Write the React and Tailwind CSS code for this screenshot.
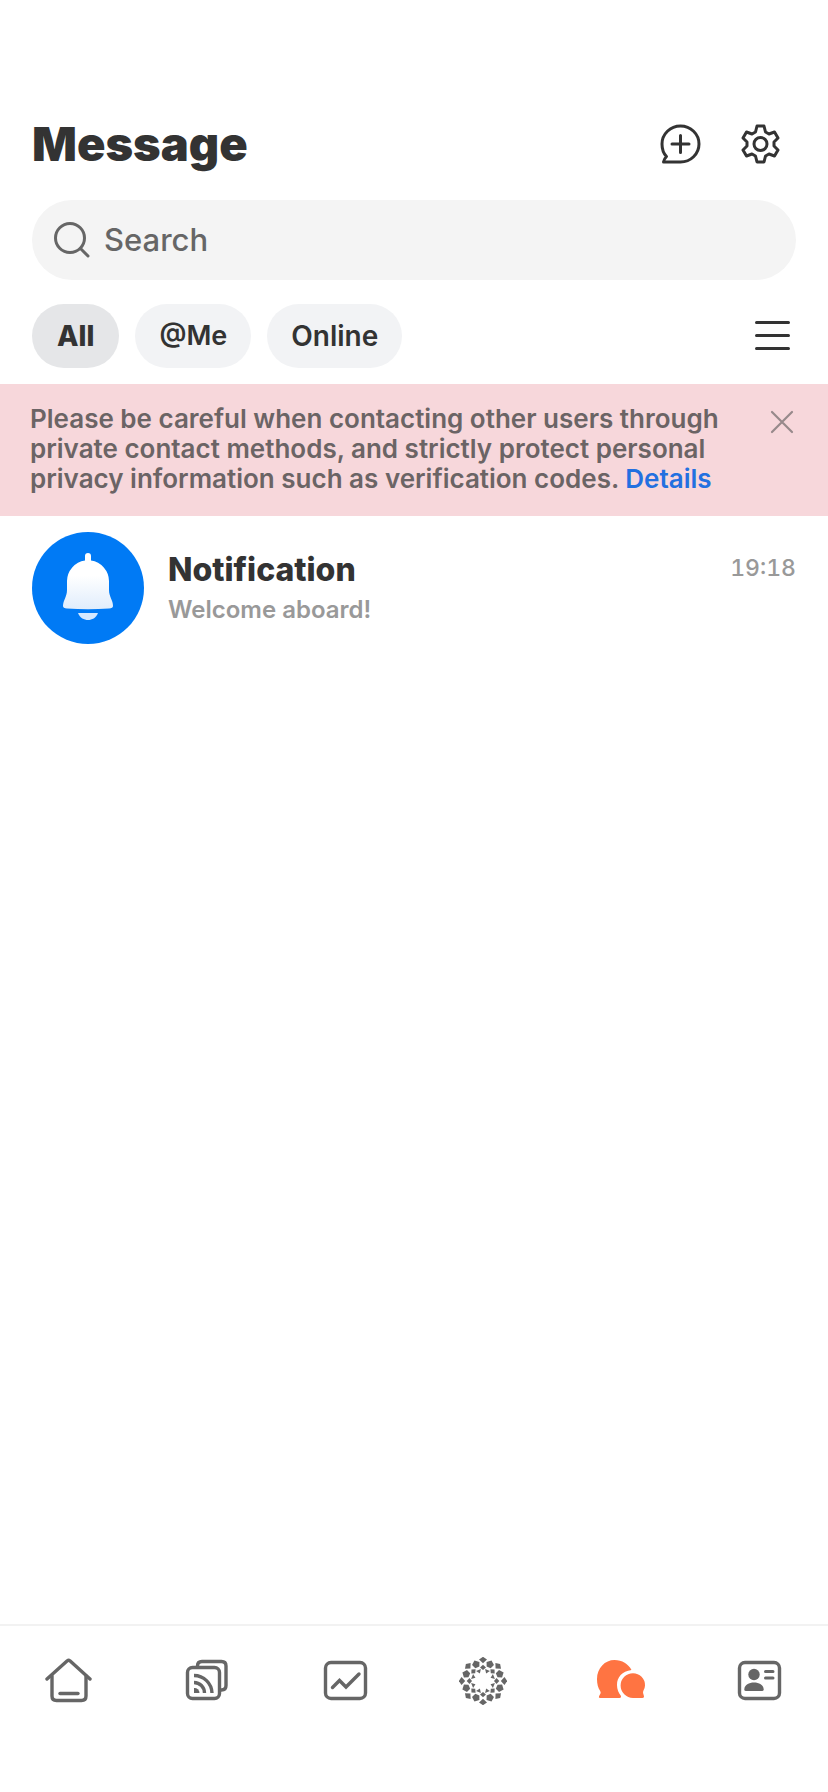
import React from "react";

const HomeIcon = () => (
  <svg width="48" height="48" viewBox="0 0 48 48" fill="none" stroke="currentColor" strokeWidth="3.4" strokeLinecap="round" strokeLinejoin="round" aria-hidden="true">
    <path d="M2 22 22.3 3.800Q23.600 2.800 24.900 3.800L45 22" />
    <path d="M7 19V39Q7 43.500 11.500 43.500H36.500Q41 43.500 41 39V19" />
    <path d="M15 36.500H33" />
  </svg>
);

const FeedIcon = () => (
  <svg width="48" height="48" viewBox="0 0 48 48" fill="none" stroke="currentColor" strokeWidth="3.4" aria-hidden="true">
    <rect x="4.500" y="10.500" width="32" height="31" rx="5" />
    <path d="M14.500 10.500V9Q14.500 4.500 19 4.500H38.500Q43 4.500 43 9V28.500Q43 33 38.500 33H37" />
    <path d="M11 18.500A18 18 0 0 1 29 36" />
    <path d="M11 25.500A10.500 10.500 0 0 1 21.500 36" />
    <path d="M11 31A5 5 0 0 1 16.500 36H11Z" fill="currentColor" stroke="none" />
  </svg>
);

const ChartIcon = () => (
  <svg width="48" height="48" viewBox="0 0 48 48" fill="none" stroke="currentColor" strokeWidth="3.4" strokeLinecap="round" aria-hidden="true">
    <rect x="4.500" y="5.500" width="40" height="36" rx="5.500" />
    <path d="M11.500 30.500 18.500 23.500 25 30 38 17" />
  </svg>
);

const angles = [0, 45, 90, 135, 180, 225, 270, 315];

const RosetteIcon = () => (
  <svg width="48" height="48" viewBox="-24 -24 48 48" fill="currentColor" aria-hidden="true">
    {angles.map((a) => (
      <g key={a} transform={`rotate(${a})`}>
        <path d="M0-24.200 4-21.500 0-17.800-4-21.500Z" />
        <path d="M0-16.300 3-13.500 0-11-3-13.500Z" />
        <g transform="rotate(22.500)">
          <path d="M0-22.300 4-19 2.200-14.800H-2.200L-4-19Z" />
          <path d="M-2.600-11.800H2.600L0-8.200Z" />
        </g>
      </g>
    ))}
  </svg>
);

const ChatIcon = () => (
  <svg width="50" height="48" viewBox="0 0 50 48" fill="currentColor" aria-hidden="true">
    <path d="M18.500 3C26 3 32.500 7 35.500 13C26 14.500 21 20 21 28C21 32 22.500 36 25 39Q25.500 41 23.500 41H4Q2.300 41 3 39.200L4.500 36.500Q5 35.500 4.200 34C2 31 1 27 1 22C1 11 9 3 18.500 3Z" />
    <path d="M37 16.200A12 12 0 0 1 49 28.500Q49 31 47.300 34Q46.800 35 47.200 36.500L48 39.300Q48.300 41 46.500 41H37A12.300 12.300 0 0 1 37 16.200Z" />
  </svg>
);

const ProfileIcon = () => (
  <svg width="48" height="48" viewBox="0 0 48 48" fill="none" stroke="currentColor" strokeWidth="3.4" strokeLinecap="round" aria-hidden="true">
    <rect x="4.500" y="5.500" width="40" height="36" rx="5.500" />
    <circle cx="19" cy="17.500" r="5.700" fill="currentColor" stroke="none" />
    <path d="M9.300 32.500C9.300 23.300 28.700 23.300 28.700 32.500Q28.700 34 27 34H11Q9.300 34 9.300 32.500Z" fill="currentColor" stroke="none" />
    <path d="M30.500 14.500h7.500M30.500 21h7.500" strokeWidth="3" />
  </svg>
);

const BellIcon = () => (
  <svg className="size-full" viewBox="0 0 112 112" aria-hidden="true">
    <defs>
      <linearGradient id="bell" x1="0" y1="0" x2="0" y2="1">
        <stop offset="0.4" stopColor="#ffffff" />
        <stop offset="1" stopColor="#e0edfc" />
      </linearGradient>
    </defs>
    <path d="M53 28.500V24Q53 21 56 21T59 24V28.500A21 21 0 0 1 77 49V58C77 65 81 68 81 74Q81 76 77 76.500Q56 78 35 76.500Q31 76 31 74C31 68 35 65 35 58V49A21 21 0 0 1 53 28.500Z" fill="url(#bell)" />
    <path d="M46 81H66C64 86 60 88 56 88S48 86 46 81Z" fill="#d5e9ff" />
  </svg>
);

const tabs = [
  { name: "Home", icon: HomeIcon },
  { name: "Feed", icon: FeedIcon },
  { name: "Market", icon: ChartIcon },
  { name: "Discover", icon: RosetteIcon },
  { name: "Messages", icon: ChatIcon, active: true },
  { name: "Profile", icon: ProfileIcon },
];

const App = () => {
  return (
    <div className="flex min-h-screen flex-col bg-white font-['Inter','Liberation_Sans',sans-serif] text-[#333333]">
      {/* Header */}
      <header className="px-8 pt-28">
        <div className="flex items-center justify-between">
          <h1 className="text-[47px] leading-16 font-black">Message</h1>
          <div className="flex gap-8 pr-3">
            <button type="button" aria-label="New message" className="size-12">
              <svg width="48" height="48" viewBox="0 0 48 48" fill="none" stroke="currentColor" strokeWidth="3" strokeLinecap="round" strokeLinejoin="round" aria-hidden="true">
                <path d="M24.500 42H7.500Q8 39 10.500 36.500C7 33 6 29 6 24A18.500 18 0 1 1 24.500 42Z" />
                <path d="M24.500 15.500V32.500M16 24H33" />
              </svg>
            </button>
            <button type="button" aria-label="Settings" className="size-12">
              <svg width="48" height="48" viewBox="0 0 48 48" fill="none" stroke="currentColor" strokeWidth="3" strokeLinejoin="round" aria-hidden="true">
                <path d="M21 6H28L29.500 12 33 14 38.500 12 42 18 38 22V26L42 30 38.500 36 33 34 29.500 36 28 42H21L19.500 36 16 34 10.500 36 7 30 11 26V22L7 18 10.500 12 16 14 19.500 12Z" />
                <circle cx="24.500" cy="24" r="6.500" />
              </svg>
            </button>
          </div>
        </div>

        {/* Search */}
        <label className="mt-6 flex h-20 items-center gap-3 rounded-full bg-[#f4f4f4] px-5 text-[#666666]">
          <svg width="40" height="40" viewBox="0 0 40 40" fill="none" stroke="currentColor" strokeWidth="3" strokeLinecap="round" aria-hidden="true">
            <circle cx="18" cy="18" r="14.500" />
            <path d="M28.500 28.500 36 36" />
          </svg>
          <input
            type="search"
            placeholder="Search"
            aria-label="Search"
            className="min-w-0 flex-1 bg-transparent text-[31px] font-medium outline-none placeholder:text-[#666666]"
          />
        </label>

        {/* Filters */}
        <div className="flex items-center justify-between pt-6 pb-4">
          <div className="flex gap-4">
            <button type="button" className="h-16 rounded-full bg-[#e5e6e8] px-[25px] text-[28px] font-extrabold">
              All
            </button>
            <button type="button" className="h-16 rounded-full bg-[#f2f3f5] px-6 text-[27px] font-semibold">
              @Me
            </button>
            <button type="button" className="h-16 rounded-full bg-[#f2f3f5] px-6 text-[28px] font-semibold">
              Online
            </button>
          </div>
          <button type="button" aria-label="Menu" className="size-12">
            <svg width="48" height="48" viewBox="0 0 48 48" fill="none" stroke="currentColor" strokeWidth="3" strokeLinecap="round" aria-hidden="true">
              <path d="M8.500 10.500H40.500M8.500 23.500H40.500M8.500 36.500H40.500" />
            </svg>
          </button>
        </div>
      </header>

      {/* Safety notice */}
      <div className="flex items-start justify-between gap-6 bg-[#f7d7db] pt-5 pr-8 pb-[22px] pl-[30px]">
        <p className="text-[26px] leading-[30px] font-semibold text-[#6b6465]">
          Please be careful when contacting other users through private contact
          methods, and strictly protect personal privacy information such as
          verification codes.{" "}
          <a href="#details" className="text-[#2370e0]">
            Details
          </a>
        </p>
        <button type="button" aria-label="Dismiss" className="text-[#97898b]">
          <svg width="28" height="36" viewBox="0 0 28 36" fill="none" stroke="currentColor" strokeWidth="2.200" strokeLinecap="round" aria-hidden="true">
            <path d="M4 8 24 28M24 8 4 28" />
          </svg>
        </button>
      </div>

      {/* Conversations */}
      <main className="flex-1">
        <a href="#notification" className="flex items-center gap-6 px-8 py-4">
          <div className="size-28 shrink-0 rounded-full bg-[#007af5]">
            <BellIcon />
          </div>
          <div className="min-w-0 flex-1">
            <div className="flex items-start justify-between">
              <h2 className="text-[32px] leading-11 font-extrabold">Notification</h2>
              <time className="text-[23px] leading-10 font-medium text-[#999999] tabular-nums">19:18</time>
            </div>
            <p className="text-2xl leading-9 font-semibold text-[#999999]">
              Welcome aboard!
            </p>
          </div>
        </a>
      </main>

      {/* Tab bar */}
      <nav className="flex border-t-2 border-[#f2f2f2] pt-[31px] pb-[87px]">
        {tabs.map(({ name, icon: Icon, active }) => (
          <button
            key={name}
            type="button"
            aria-label={name}
            className={`flex flex-1 justify-center ${active ? "text-[#ff7442]" : "text-[#666666]"}`}
          >
            <Icon />
          </button>
        ))}
      </nav>
    </div>
  );
};

export default App;
